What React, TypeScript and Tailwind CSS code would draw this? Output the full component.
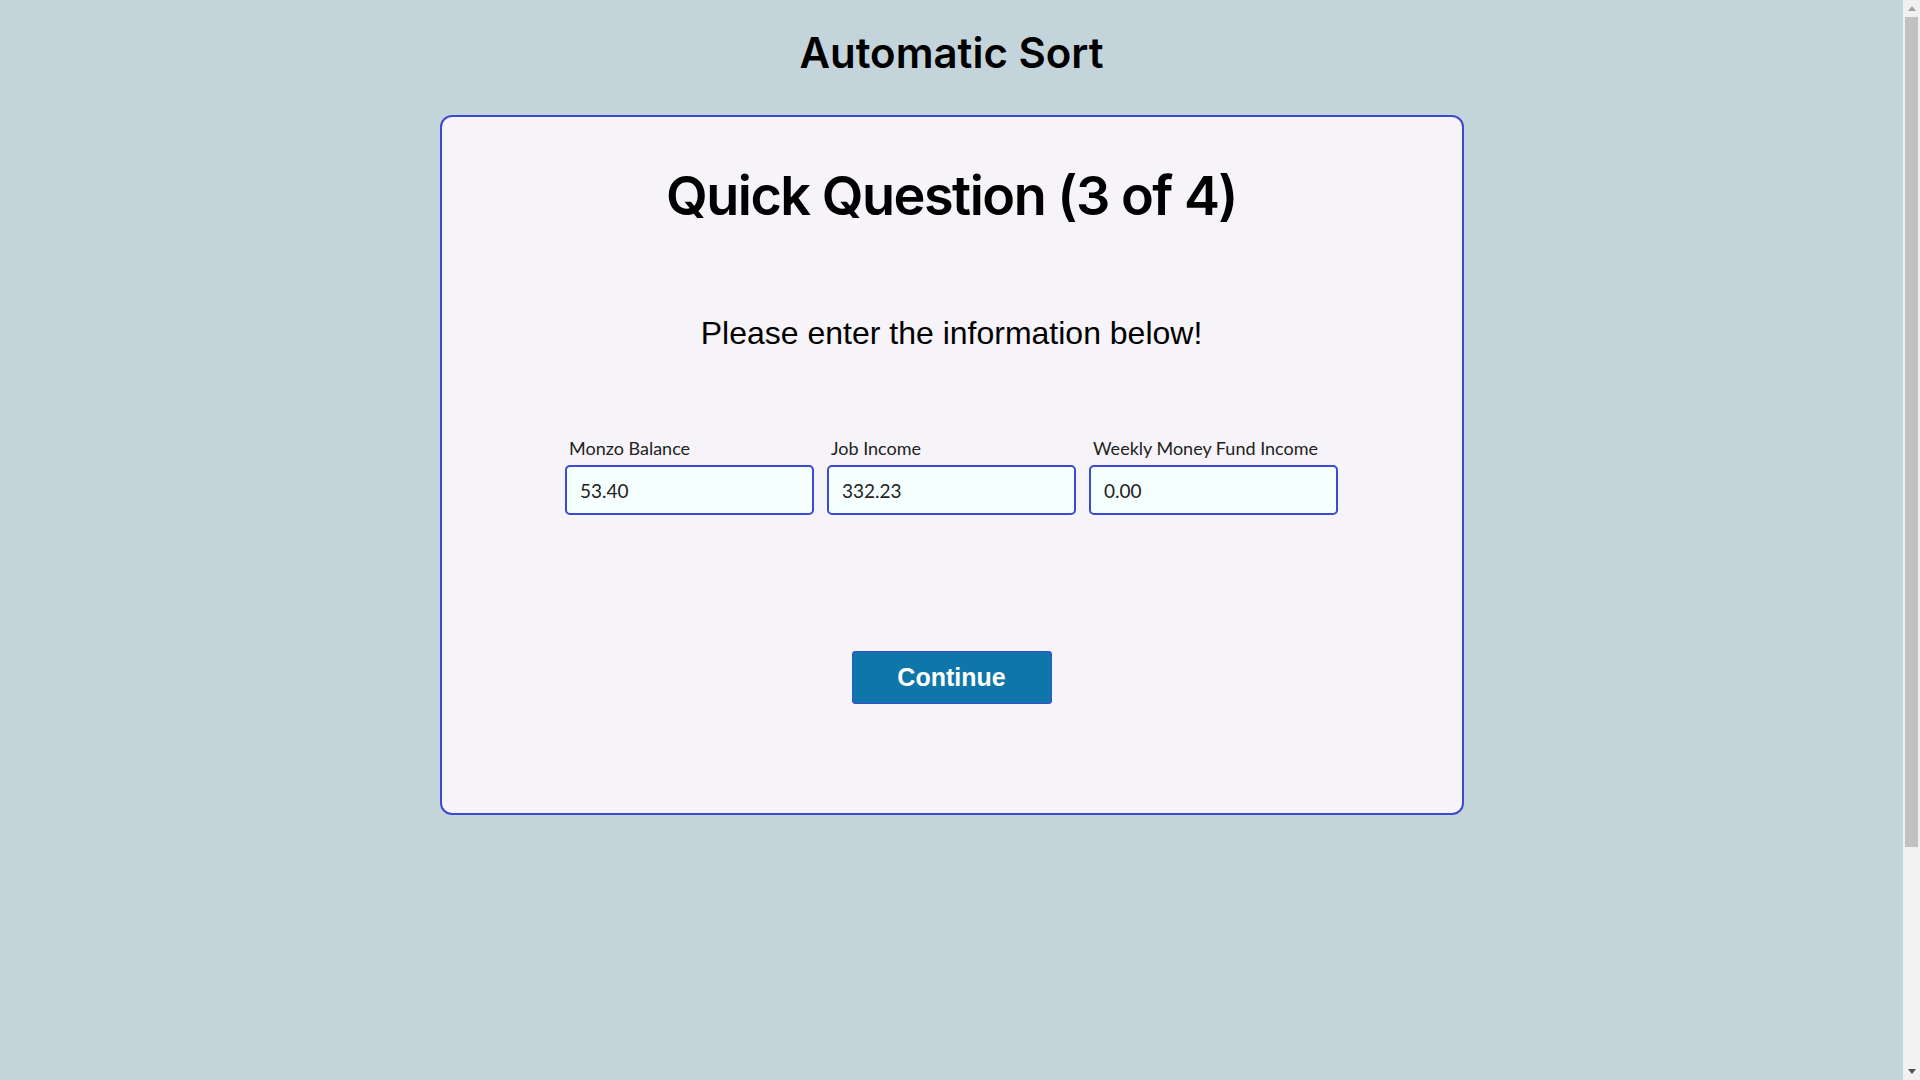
const FIELDS = [
  { label: "Monzo Balance", value: "53.40" },
  { label: "Job Income", value: "332.23" },
  { label: "Weekly Money Fund Income", value: "0.00" },
];

function Scrollbar() {
  return (
    <div className="flex h-full w-[17px] shrink-0 flex-col bg-[#f1f1f1]">
      <div className="flex h-[17px] items-center justify-center">
        <svg width="8" height="5" viewBox="0 0 8 5">
          <path d="M4 0 L8 5 L0 5 Z" fill="#a3a3a3" />
        </svg>
      </div>
      <div className="mx-[2px] h-[830px] bg-[#c1c1c1]" />
      <div className="flex-1" />
      <div className="flex h-[17px] items-center justify-center">
        <svg width="8" height="5" viewBox="0 0 8 5">
          <path d="M0 0 L8 0 L4 5 Z" fill="#505050" />
        </svg>
      </div>
    </div>
  );
}

export default function App() {
  return (
    <div className="flex h-screen overflow-hidden bg-[#c4d4db]">
      <div className="flex-1 pt-[32px]">
        <h1 className="text-center font-['Inter',sans-serif] text-[42px] font-semibold leading-none text-black">
          Automatic Sort
        </h1>

        <main className="mx-auto mt-[41px] w-[1024px] rounded-[12px] border-2 border-[#3a4ad3] bg-[#f6f4f8] pb-[109px] pt-[52px]">
          <h2 className="text-center font-['Inter',sans-serif] text-[54px] font-semibold leading-none tracking-[-1.5px] text-black">
            Quick Question (3 of 4)
          </h2>

          <p className="mt-[94px] text-center font-['Liberation_Sans',Arial,sans-serif] text-[32px] leading-none text-black">
            Please enter the information below!
          </p>

          <div className="mt-[90px] flex justify-center gap-[13px]">
            {FIELDS.map((f) => (
              <label key={f.label} className="flex w-[249px] flex-col">
                <span className="pl-[4px] font-['Lato',sans-serif] text-[18px] leading-none text-[#222]">
                  {f.label}
                </span>
                <input
                  defaultValue={f.value}
                  className="mt-[8px] h-[50px] w-full rounded-[5px] border-2 border-[#3a4ad3] bg-[#f5fffe] px-[13px] font-['Lato',sans-serif] text-[19px] text-[#222] outline-none"
                />
              </label>
            ))}
          </div>

          <div className="mt-[136px] flex justify-center">
            <button className="h-[53px] w-[200px] rounded-[3px] border border-[#3a4ad3] bg-[#0e76a8] font-['Liberation_Sans',Arial,sans-serif] text-[25px] font-bold text-white">
              Continue
            </button>
          </div>
        </main>
      </div>
      <Scrollbar />
    </div>
  );
}
